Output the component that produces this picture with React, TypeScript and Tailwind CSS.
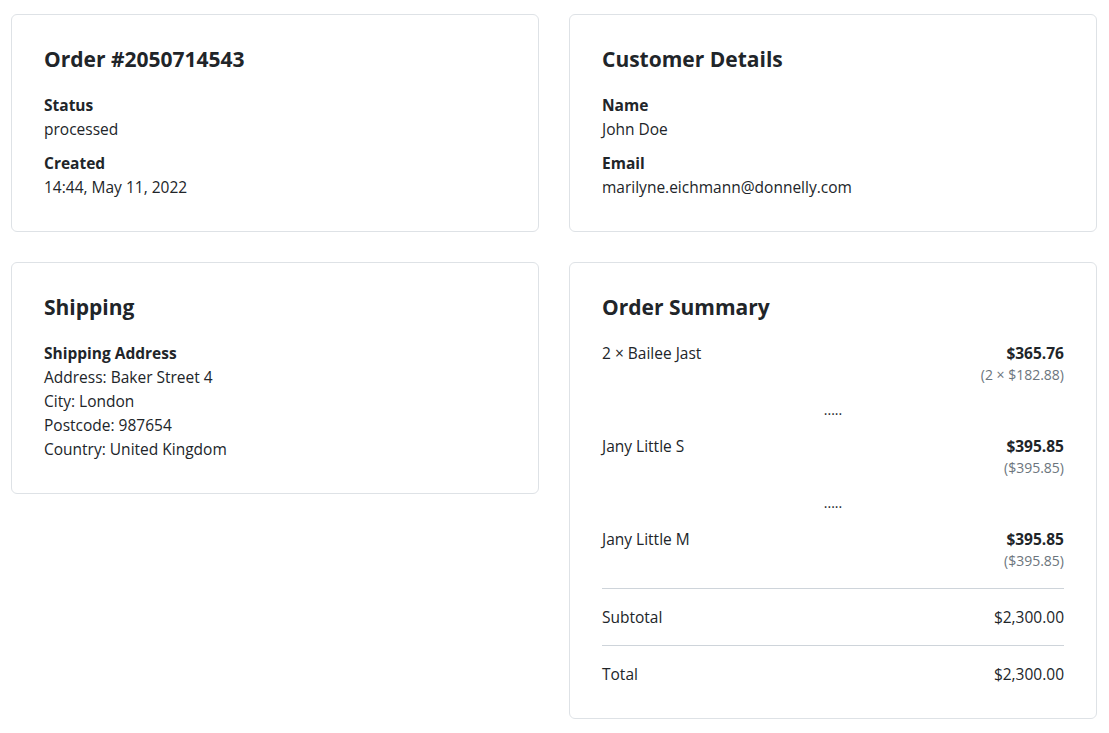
const items = [
  { name: "2 × Bailee Jast", total: "$365.76", detail: "(2 × $182.88)" },
  { name: "Jany Little S", total: "$395.85", detail: "($395.85)" },
  { name: "Jany Little M", total: "$395.85", detail: "($395.85)" },
];

function Card({ title, children }: { title: string; children: React.ReactNode }) {
  return (
    <div className="rounded-md border border-[#dee2e6] bg-white p-8">
      <h2 className="mb-[21px] text-[21px] font-bold leading-[25px] text-[#212529]">{title}</h2>
      {children}
    </div>
  );
}

function Field({ label, value }: { label: string; value: string }) {
  return (
    <div>
      <div className="font-bold">{label}</div>
      <div>{value}</div>
    </div>
  );
}

export default function App() {
  return (
    <div
      className="grid grid-cols-2 items-start gap-[30px] bg-white pl-[11px] pr-3 pt-[14px] text-[15.5px] leading-6 text-[#212529]"
      style={{ fontFamily: '"Open Sans", "Noto Sans", sans-serif' }}
    >
      <Card title="Order #2050714543">
        <div className="flex flex-col gap-2.5">
          <Field label="Status" value="processed" />
          <Field label="Created" value="14:44, May 11, 2022" />
        </div>
      </Card>

      <Card title="Customer Details">
        <div className="flex flex-col gap-2.5">
          <Field label="Name" value="John Doe" />
          <Field label="Email" value="marilyne.eichmann@donnelly.com" />
        </div>
      </Card>

      <Card title="Shipping">
        <div className="font-bold">Shipping Address</div>
        <div>Address: Baker Street 4</div>
        <div>City: London</div>
        <div>Postcode: 987654</div>
        <div>Country: United Kingdom</div>
      </Card>

      <Card title="Order Summary">
        {items.map((item, i) => (
          <div key={item.name}>
            {i > 0 && <div className="my-3 text-center text-[14px] leading-[25px]">.....</div>}
            <div className="flex justify-between">
              <span>{item.name}</span>
              <div className="text-right">
                <div className="font-bold">{item.total}</div>
                <div className="text-[14px] leading-5 text-[#6c757d]">{item.detail}</div>
              </div>
            </div>
          </div>
        ))}
        <div className="mt-[17px] flex justify-between border-t border-[#ced4da] py-4">
          <span>Subtotal</span>
          <span>$2,300.00</span>
        </div>
        <div className="flex justify-between border-t border-[#ced4da] pt-4">
          <span>Total</span>
          <span>$2,300.00</span>
        </div>
      </Card>
    </div>
  );
}
